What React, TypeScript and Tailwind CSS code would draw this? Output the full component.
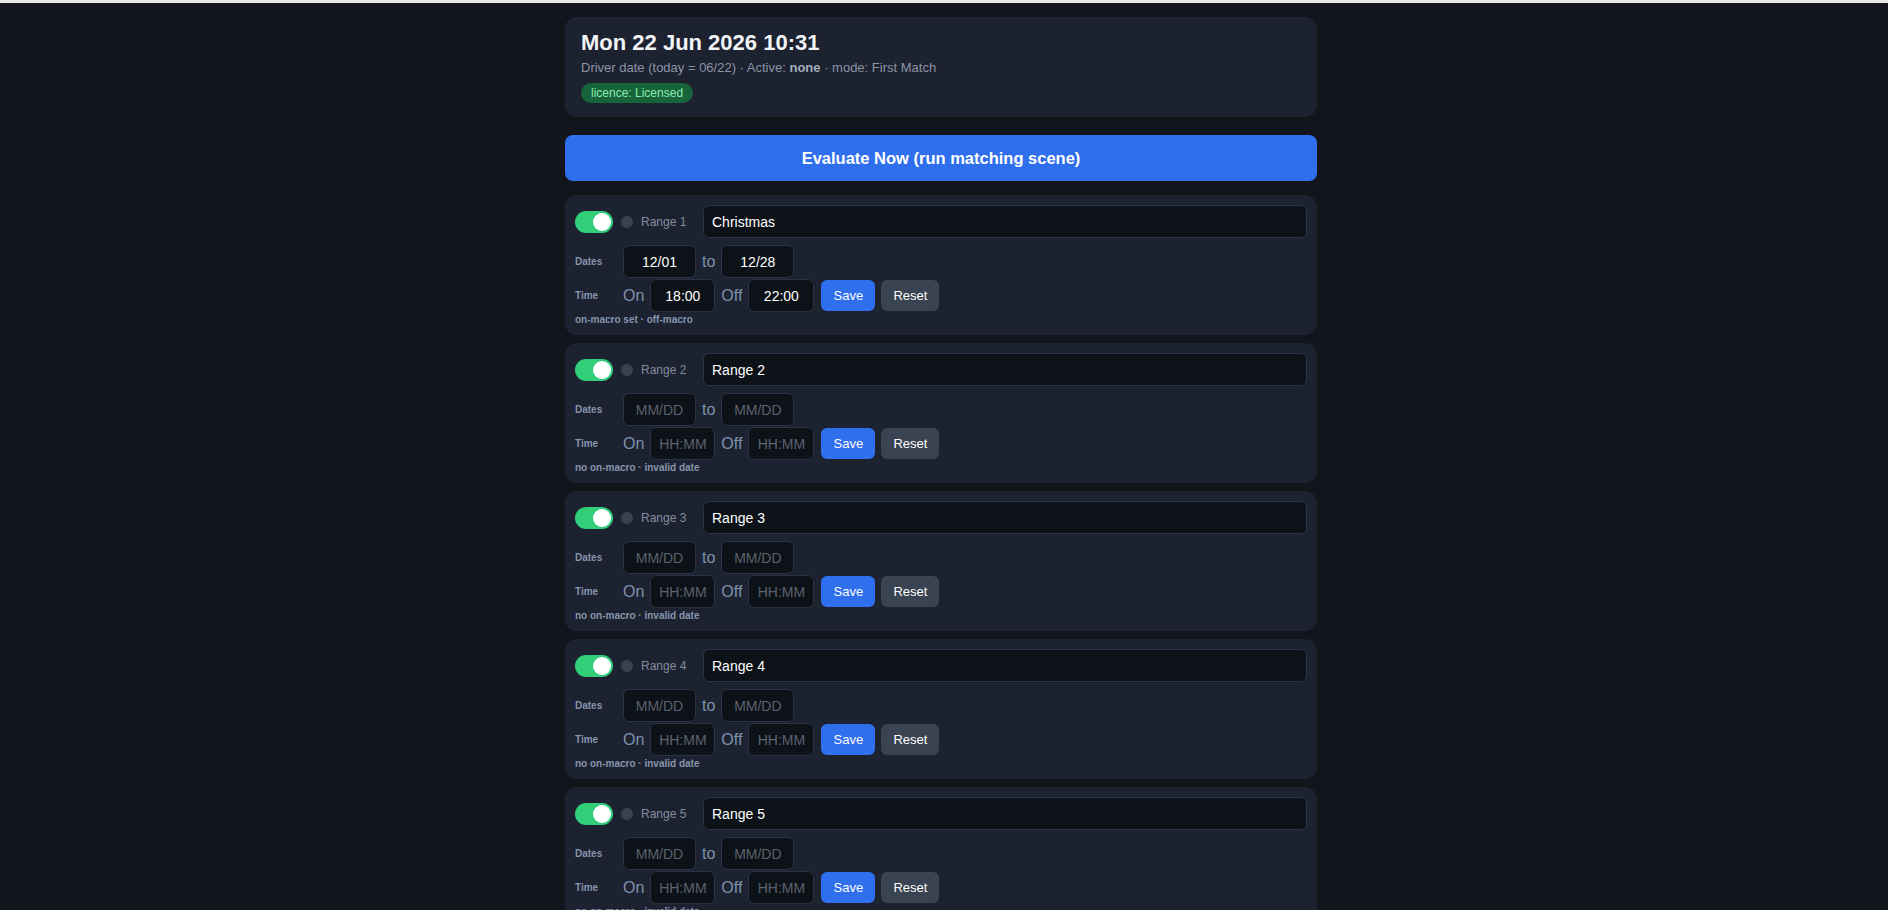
import React from "react";

type Range = {
  name: string;
  from: string;
  to: string;
  on: string;
  off: string;
  note: string;
};

const ranges: Range[] = [
  { name: "Christmas", from: "12/01", to: "12/28", on: "18:00", off: "22:00", note: "on-macro set · off-macro" },
  { name: "Range 2", from: "", to: "", on: "", off: "", note: "no on-macro · invalid date" },
  { name: "Range 3", from: "", to: "", on: "", off: "", note: "no on-macro · invalid date" },
  { name: "Range 4", from: "", to: "", on: "", off: "", note: "no on-macro · invalid date" },
  { name: "Range 5", from: "", to: "", on: "", off: "", note: "no on-macro · invalid date" },
  { name: "Range 6", from: "", to: "", on: "", off: "", note: "no on-macro · invalid date" },
];

const boxInput =
  "h-[33px] rounded-md border border-[#2a3444] bg-[#0d1118] text-[14px] text-white text-center outline-none placeholder:text-[#5c626e]";

function RangeCard({ r, idx }: { r: Range; idx: number }) {
  return (
    <div className="flex flex-col rounded-xl bg-[#1d2230] px-[10px] pt-[10px] pb-[9px]">
      <div className="flex h-[33px] items-center">
        <div className="flex h-[22px] w-[38px] items-center justify-end rounded-full bg-[#33ce79] px-[2px]">
          <div className="h-[18px] w-[18px] rounded-full bg-white" />
        </div>
        <div className="ml-[8px] h-[12px] w-[12px] rounded-full bg-[#3a4150]" />
        <div className="ml-[8px] w-[54px] text-[12px] text-[#838c9d]">Range {idx + 1}</div>
        <input
          className="ml-[8px] h-[33px] flex-1 rounded-md border border-[#2a3444] bg-[#0d1118] pl-[8px] text-[14px] text-white outline-none"
          defaultValue={r.name}
          readOnly
        />
      </div>
      <div className="mt-[7px] flex h-[33px] items-center gap-[6px]">
        <div className="w-[42px] text-[10px] font-bold text-[#8595ad]">Dates</div>
        <input className={`${boxInput} w-[73px]`} defaultValue={r.from} placeholder="MM/DD" readOnly />
        <span className="text-[16px] text-[#7d92ad]">to</span>
        <input className={`${boxInput} w-[73px]`} defaultValue={r.to} placeholder="MM/DD" readOnly />
      </div>
      <div className="mt-px flex h-[33px] items-center gap-[6px]">
        <div className="w-[42px] text-[10px] font-bold text-[#8595ad]">Time</div>
        <span className="text-[16px] text-[#7d92ad]">On</span>
        <input className={`${boxInput} w-[65px]`} defaultValue={r.on} placeholder="HH:MM" readOnly />
        <span className="text-[16px] text-[#7d92ad]">Off</span>
        <input className={`${boxInput} w-[66px]`} defaultValue={r.off} placeholder="HH:MM" readOnly />
        <button className="ml-px h-[31px] w-[54px] rounded-md bg-[#2f6eed] text-[13px] text-white">Save</button>
        <button className="h-[31px] w-[58px] rounded-md bg-[#3a4351] text-[13px] text-white">Reset</button>
      </div>
      <div className="mt-px text-[10px] font-bold leading-[13px] text-[#8595ad]">{r.note}</div>
    </div>
  );
}

export default function App() {
  return (
    <div className="h-[910px] overflow-hidden bg-[#12151b] font-['Liberation_Sans',Arial,sans-serif]">
      <div className="h-[3px] bg-[#e6e6e6]" />
      <div className="flex justify-center pr-[6px] pt-[14px]">
        <div className="flex w-[752px] flex-col">
          <div className="rounded-xl bg-[#1d2230] px-4 pt-[13px] pb-[13px]">
            <h1 className="text-[22px] font-bold leading-[26px] text-[#f1f4f8]">Mon 22 Jun 2026 10:31</h1>
            <p className="mt-[4px] text-[13px] leading-[16px] text-[#8b94a5]">
              Driver date (today = 06/22) · Active: <b className="text-[#a3adbd]">none</b> · mode: First Match
            </p>
            <div className="mt-[7px] inline-flex h-[20px] items-center rounded-full bg-[#17643a] px-[10px] text-[12px] text-[#8ceeb0]">
              licence: Licensed
            </div>
          </div>
          <button className="mt-[18px] h-[46px] rounded-lg bg-[#2f6eed] text-[16.5px] font-bold text-white">
            Evaluate Now (run matching scene)
          </button>
          <div className="mt-[14px] flex flex-col gap-[8px]">
            {ranges.map((r, i) => (
              <RangeCard key={i} r={r} idx={i} />
            ))}
          </div>
        </div>
      </div>
    </div>
  );
}
